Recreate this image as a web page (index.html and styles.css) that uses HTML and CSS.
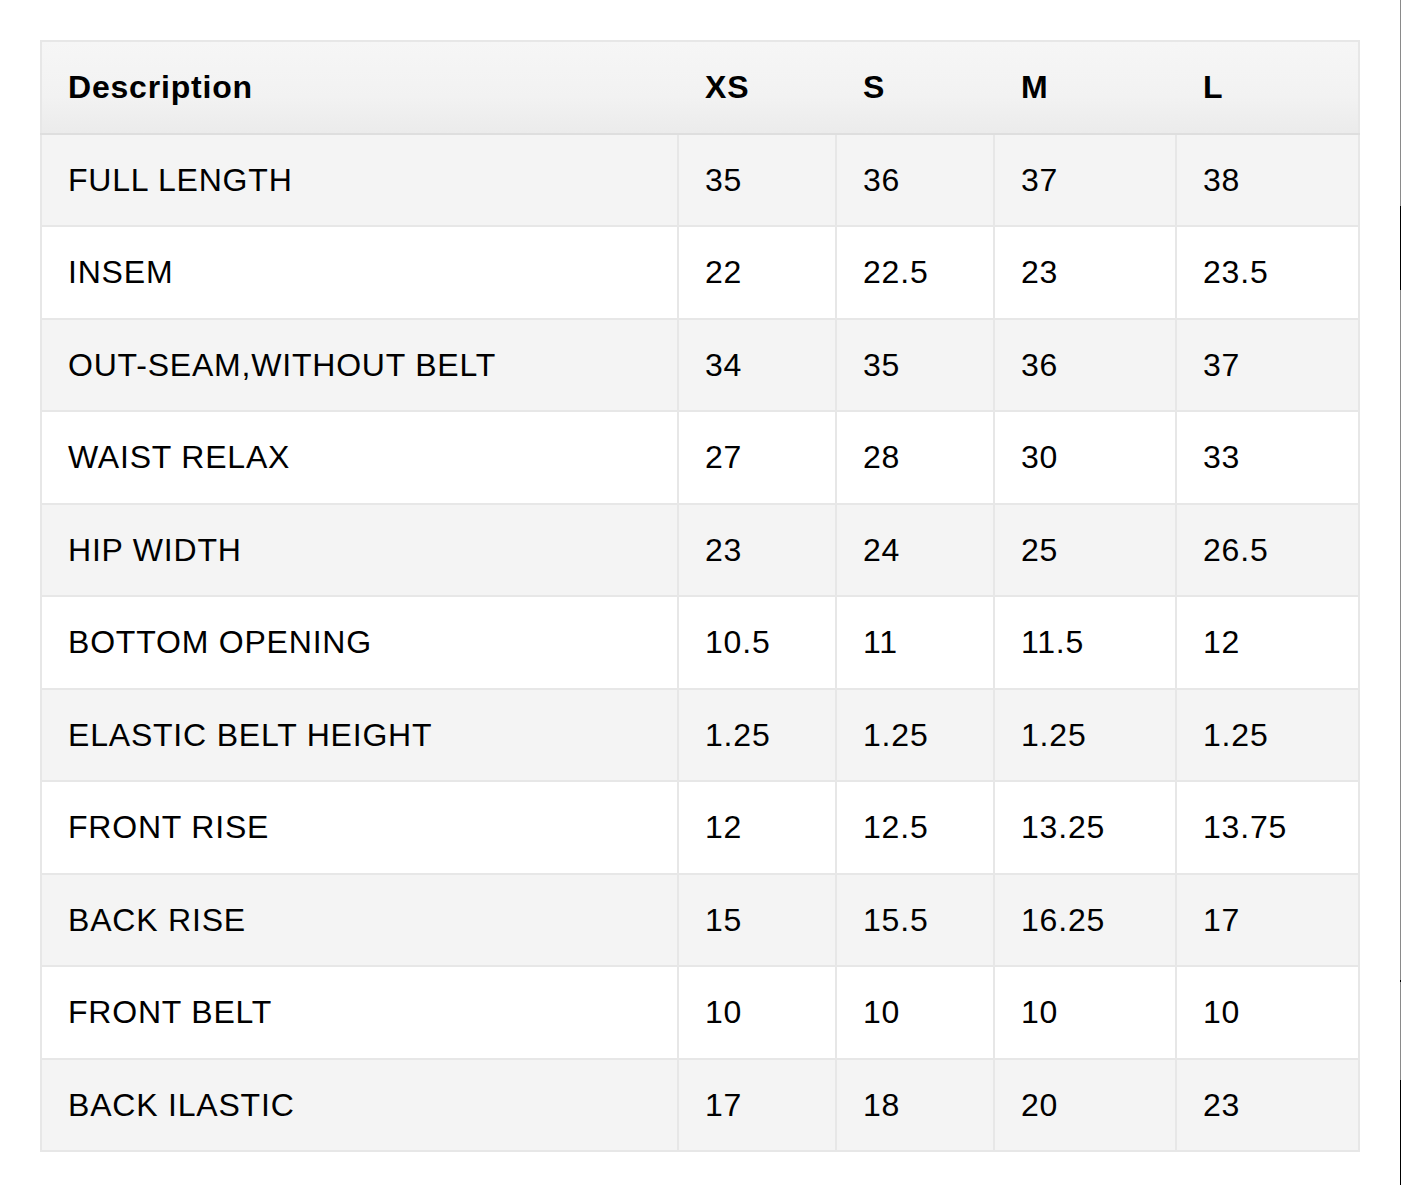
FILE: index.html
```html
<!DOCTYPE html>
<html>
<head>
<meta charset="utf-8">
<link rel="stylesheet" href="styles.css">
</head>
<body>
<div class="page">
<table class="size-table">
  <colgroup>
    <col class="c-desc">
    <col class="c-size">
    <col class="c-size">
    <col class="c-wide">
    <col class="c-wide2">
  </colgroup>
  <thead>
    <tr><th>Description</th><th>XS</th><th>S</th><th>M</th><th>L</th></tr>
  </thead>
  <tbody>
    <tr><td>FULL LENGTH</td><td>35</td><td>36</td><td>37</td><td>38</td></tr>
    <tr><td>INSEM</td><td>22</td><td>22.5</td><td>23</td><td>23.5</td></tr>
    <tr><td>OUT-SEAM,WITHOUT BELT</td><td>34</td><td>35</td><td>36</td><td>37</td></tr>
    <tr><td>WAIST RELAX</td><td>27</td><td>28</td><td>30</td><td>33</td></tr>
    <tr><td>HIP WIDTH</td><td>23</td><td>24</td><td>25</td><td>26.5</td></tr>
    <tr><td>BOTTOM OPENING</td><td>10.5</td><td>11</td><td>11.5</td><td>12</td></tr>
    <tr><td>ELASTIC BELT HEIGHT</td><td>1.25</td><td>1.25</td><td>1.25</td><td>1.25</td></tr>
    <tr><td>FRONT RISE</td><td>12</td><td>12.5</td><td>13.25</td><td>13.75</td></tr>
    <tr><td>BACK RISE</td><td>15</td><td>15.5</td><td>16.25</td><td>17</td></tr>
    <tr><td>FRONT BELT</td><td>10</td><td>10</td><td>10</td><td>10</td></tr>
    <tr><td>BACK ILASTIC</td><td>17</td><td>18</td><td>20</td><td>23</td></tr>
  </tbody>
</table>
</div>
<div class="edge-line"></div>
</body>
</html>
```

FILE: styles.css
```css
html, body {
  margin: 0;
  padding: 0;
  background: #ffffff;
}

.page {
  padding: 40px 0 0 40px;
}

.size-table {
  border-collapse: collapse;
  table-layout: fixed;
  width: 1320px;
  font-family: "Liberation Sans", Arial, sans-serif;
  font-size: 32px;
  letter-spacing: 0.8px;
  color: #000000;
}

.c-desc { width: 637px; }
.c-size { width: 158px; }
.c-wide { width: 182px; }
.c-wide2 { width: 183px; }

.size-table th,
.size-table td {
  border: 2px solid #e7e7e7;
  text-align: left;
  padding: 27px 0 27px 26px;
  line-height: 36.5px;
  white-space: nowrap;
}

.size-table thead th {
  font-weight: bold;
  background: linear-gradient(to bottom, #f6f6f6 0%, #f2f2f2 60%, #ebebeb 100%);
  border-left-color: transparent;
  border-right-color: transparent;
  border-bottom-color: #dedede;
}

.size-table thead th:first-child { border-left-color: #e7e7e7; }
.size-table thead th:last-child { border-right-color: #e7e7e7; }

.size-table tbody tr:nth-child(odd) td { background: #f4f4f4; }
.size-table tbody tr:nth-child(even) td { background: #ffffff; }

.edge-line {
  position: fixed;
  top: 0;
  right: 0;
  width: 1px;
  height: 100%;
  background: linear-gradient(to bottom,
    #8a8a8a 0px, #8a8a8a 206px,
    #000000 206px, #000000 290px,
    #8a8a8a 290px, #8a8a8a 980px,
    #000000 980px, #000000 982px,
    #8a8a8a 982px, #8a8a8a 1080px,
    #000000 1080px, #000000 100%);
}
```
